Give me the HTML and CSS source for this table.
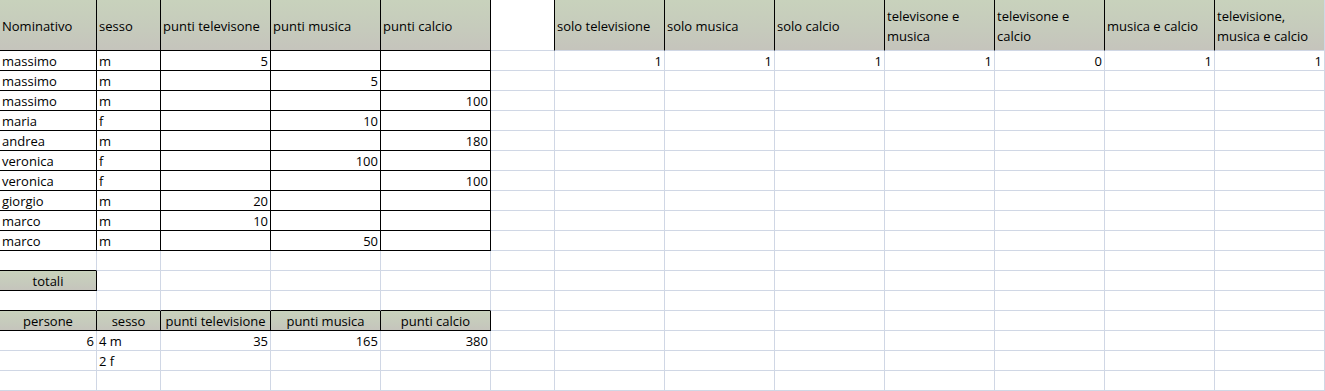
FILE: index.html
```html
<!DOCTYPE html>
<html lang="it">
<head>
<meta charset="utf-8">
<title>Foglio punti</title>
<link rel="stylesheet" href="styles.css">
</head>
<body>
<div class="sheet">
  <!-- row 1: headers -->
  <div class="c k h t">Nominativo</div>
  <div class="c k h t">sesso</div>
  <div class="c k h t">punti televisone</div>
  <div class="c k h t">punti musica</div>
  <div class="c k h t">punti calcio</div>
  <div class="c kr"></div>
  <div class="c kr h t">solo televisione</div>
  <div class="c kr h t">solo musica</div>
  <div class="c kr h t">solo calcio</div>
  <div class="c kr h t">televisone e musica</div>
  <div class="c kr h t">televisone e calcio</div>
  <div class="c kr h t">musica e calcio</div>
  <div class="c h t">televisione, musica e calcio</div>

  <!-- row 2 -->
  <div class="c k">massimo</div><div class="c k">m</div><div class="c k n">5</div><div class="c k"></div><div class="c k"></div>
  <div class="c"></div><div class="c n">1</div><div class="c n">1</div><div class="c n">1</div><div class="c n">1</div><div class="c n">0</div><div class="c n">1</div><div class="c n">1</div>
  <!-- row 3 -->
  <div class="c k">massimo</div><div class="c k">m</div><div class="c k"></div><div class="c k n">5</div><div class="c k"></div>
  <div class="c"></div><div class="c"></div><div class="c"></div><div class="c"></div><div class="c"></div><div class="c"></div><div class="c"></div><div class="c"></div>
  <!-- row 4 -->
  <div class="c k">massimo</div><div class="c k">m</div><div class="c k"></div><div class="c k"></div><div class="c k n">100</div>
  <div class="c"></div><div class="c"></div><div class="c"></div><div class="c"></div><div class="c"></div><div class="c"></div><div class="c"></div><div class="c"></div>
  <!-- row 5 -->
  <div class="c k">maria</div><div class="c k">f</div><div class="c k"></div><div class="c k n">10</div><div class="c k"></div>
  <div class="c"></div><div class="c"></div><div class="c"></div><div class="c"></div><div class="c"></div><div class="c"></div><div class="c"></div><div class="c"></div>
  <!-- row 6 -->
  <div class="c k">andrea</div><div class="c k">m</div><div class="c k"></div><div class="c k"></div><div class="c k n">180</div>
  <div class="c"></div><div class="c"></div><div class="c"></div><div class="c"></div><div class="c"></div><div class="c"></div><div class="c"></div><div class="c"></div>
  <!-- row 7 -->
  <div class="c k">veronica</div><div class="c k">f</div><div class="c k"></div><div class="c k n">100</div><div class="c k"></div>
  <div class="c"></div><div class="c"></div><div class="c"></div><div class="c"></div><div class="c"></div><div class="c"></div><div class="c"></div><div class="c"></div>
  <!-- row 8 -->
  <div class="c k">veronica</div><div class="c k">f</div><div class="c k"></div><div class="c k"></div><div class="c k n">100</div>
  <div class="c"></div><div class="c"></div><div class="c"></div><div class="c"></div><div class="c"></div><div class="c"></div><div class="c"></div><div class="c"></div>
  <!-- row 9 -->
  <div class="c k">giorgio</div><div class="c k">m</div><div class="c k n">20</div><div class="c k"></div><div class="c k"></div>
  <div class="c"></div><div class="c"></div><div class="c"></div><div class="c"></div><div class="c"></div><div class="c"></div><div class="c"></div><div class="c"></div>
  <!-- row 10 -->
  <div class="c k">marco</div><div class="c k">m</div><div class="c k n">10</div><div class="c k"></div><div class="c k"></div>
  <div class="c"></div><div class="c"></div><div class="c"></div><div class="c"></div><div class="c"></div><div class="c"></div><div class="c"></div><div class="c"></div>
  <!-- row 11 -->
  <div class="c k">marco</div><div class="c k">m</div><div class="c k"></div><div class="c k n">50</div><div class="c k"></div>
  <div class="c"></div><div class="c"></div><div class="c"></div><div class="c"></div><div class="c"></div><div class="c"></div><div class="c"></div><div class="c"></div>

  <!-- row 12: empty -->
  <div class="c kb"></div><div class="c"></div><div class="c"></div><div class="c"></div><div class="c"></div>
  <div class="c"></div><div class="c"></div><div class="c"></div><div class="c"></div><div class="c"></div><div class="c"></div><div class="c"></div><div class="c"></div>
  <!-- row 13: totali -->
  <div class="c k h m">totali</div><div class="c"></div><div class="c"></div><div class="c"></div><div class="c"></div>
  <div class="c"></div><div class="c"></div><div class="c"></div><div class="c"></div><div class="c"></div><div class="c"></div><div class="c"></div><div class="c"></div>
  <!-- row 14: empty -->
  <div class="c kb"></div><div class="c kb"></div><div class="c kb"></div><div class="c kb"></div><div class="c kb"></div>
  <div class="c"></div><div class="c"></div><div class="c"></div><div class="c"></div><div class="c"></div><div class="c"></div><div class="c"></div><div class="c"></div>
  <!-- row 15: totals header -->
  <div class="c k h m">persone</div><div class="c k h m">sesso</div><div class="c k h m">punti televisione</div><div class="c k h m">punti musica</div><div class="c k h m">punti calcio</div>
  <div class="c"></div><div class="c"></div><div class="c"></div><div class="c"></div><div class="c"></div><div class="c"></div><div class="c"></div><div class="c"></div>
  <!-- row 16 -->
  <div class="c n">6</div><div class="c">4 m</div><div class="c n">35</div><div class="c n">165</div><div class="c n">380</div>
  <div class="c"></div><div class="c"></div><div class="c"></div><div class="c"></div><div class="c"></div><div class="c"></div><div class="c"></div><div class="c"></div>
  <!-- row 17 -->
  <div class="c"></div><div class="c">2 f</div><div class="c"></div><div class="c"></div><div class="c"></div>
  <div class="c"></div><div class="c"></div><div class="c"></div><div class="c"></div><div class="c"></div><div class="c"></div><div class="c"></div><div class="c"></div>
  <!-- row 18 -->
  <div class="c"></div><div class="c"></div><div class="c"></div><div class="c"></div><div class="c"></div>
  <div class="c"></div><div class="c"></div><div class="c"></div><div class="c"></div><div class="c"></div><div class="c"></div><div class="c"></div><div class="c"></div>
</div>
</body>
</html>
```

FILE: styles.css
```css
html, body {
  margin: 0;
  padding: 0;
  background: #ffffff;
}

body {
  font-family: "Open Sans", "Liberation Sans", sans-serif;
  font-size: 13px;
  color: #000000;
  overflow: hidden;
}

.sheet {
  display: grid;
  grid-template-columns: 97px 64px 110px 110px 110px 64px repeat(7, 110px);
  grid-template-rows: 51px repeat(17, 20px);
  width: 1325px;
}

.c {
  box-sizing: border-box;
  border-right: 1px solid #d0d7e5;
  border-bottom: 1px solid #d0d7e5;
  padding: 0 2px 0 2px;
  display: flex;
  align-items: flex-end;
  line-height: 18px;
  white-space: nowrap;
  overflow: hidden;
}

.n {
  justify-content: flex-end;
}

.m {
  justify-content: center;
}

.k {
  border-right-color: #000000;
  border-bottom-color: #000000;
}

.kr {
  border-right-color: #000000;
}

.kb {
  border-bottom-color: #000000;
}

.h {
  background: linear-gradient(180deg, #c8d2bc 0%, #c6cbbc 55%, #c5c4bc 100%);
}

.t {
  align-items: center;
  line-height: 20px;
  white-space: normal;
  padding-top: 1px;
}
```
